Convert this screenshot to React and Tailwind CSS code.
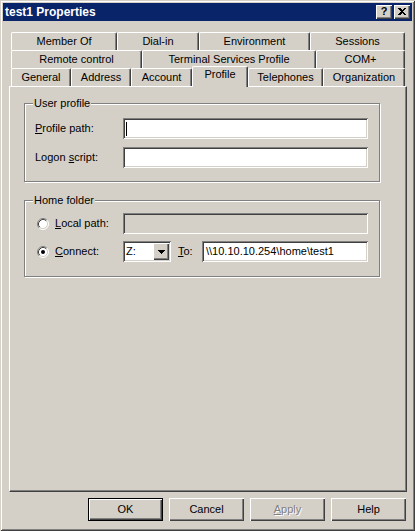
import React from "react";

const sunken =
  "shadow-[inset_1px_1px_0_#808080,inset_-1px_-1px_0_#ffffff,inset_2px_2px_0_#404040,inset_-2px_-2px_0_#d4d0c8]";
const raised =
  "shadow-[inset_1px_1px_0_#ffffff,inset_-1px_-1px_0_#404040,inset_-2px_-2px_0_#808080]";
const defaultRaised =
  "shadow-[inset_0_0_0_1px_#000000,inset_2px_2px_0_#ffffff,inset_-2px_-2px_0_#404040,inset_-3px_-3px_0_#808080]";
const etched =
  "border border-[#808080] shadow-[inset_1px_1px_0_#ffffff,1px_1px_0_#ffffff]";

const tabRows = [
  [
    ["Member Of", "w-[106px]"],
    ["Dial-in", "w-[82px]"],
    ["Environment", "w-[111px]"],
    ["Sessions", "w-[95px]"],
  ],
  [
    ["Remote control", "w-[131px]"],
    ["Terminal Services Profile", "w-[174px]"],
    ["COM+", "w-[89px]"],
  ],
  [
    ["General", "w-[60px]"],
    ["Address", "w-[60px]"],
    ["Account", "w-[61px]"],
    ["Profile", "w-[56px]", true],
    ["Telephones", "w-[75px]"],
    ["Organization", "w-[82px]"],
  ],
];

function Tab({ label, width, selected }) {
  if (selected) {
    return (
      <div
        className={`relative z-10 -mb-px flex h-[21px] shrink-0 justify-center rounded-t-[2px] border-x border-t border-l-white border-r-[#404040] border-t-white bg-[#d4d0c8] pt-px shadow-[inset_-1px_0_0_#808080] ${width}`}
      >
        {label}
      </div>
    );
  }
  return (
    <div
      className={`flex h-[18px] shrink-0 items-center justify-center rounded-t-[2px] border-x border-t border-l-white border-r-[#404040] border-t-white bg-[#d4d0c8] shadow-[inset_-1px_0_0_#808080] ${width}`}
    >
      {label}
    </div>
  );
}

function Radio({ checked }) {
  return (
    <svg width="12" height="12" viewBox="0 0 12 12" className="shrink-0">
      <circle cx="6" cy="6" r="5" fill="#fff" />
      <path d="M2.11 9.89A5.5 5.5 0 0 1 9.89 2.11" stroke="#808080" fill="none" />
      <path d="M9.89 2.11A5.5 5.5 0 0 1 2.11 9.89" stroke="#fff" fill="none" />
      <path d="M2.82 9.18A4.5 4.5 0 0 1 9.18 2.82" stroke="#404040" fill="none" />
      <path d="M9.18 2.82A4.5 4.5 0 0 1 2.82 9.18" stroke="#d4d0c8" fill="none" />
      {checked && <circle cx="6" cy="6" r="2" fill="#000" />}
    </svg>
  );
}

function GroupBox({ title, height, children }) {
  return (
    <div className={`relative w-[356px] ${height} ${etched}`}>
      <span className="absolute -top-[7px] left-[8px] bg-[#d4d0c8] px-px">
        {title}
      </span>
      {children}
    </div>
  );
}

function Button({ children, isDefault, disabled }) {
  return (
    <div
      className={`flex h-[23px] w-[75px] items-center justify-center bg-[#d4d0c8] ${
        isDefault ? defaultRaised : raised
      } ${disabled ? "text-[#808080] [text-shadow:1px_1px_0_#ffffff]" : ""}`}
    >
      {children}
    </div>
  );
}

export default function App() {
  return (
    <div className="h-[531px] w-[415px] bg-[#d4d0c8] p-[3px] font-['Liberation_Sans',Arial,sans-serif] text-[11px] leading-[13px] text-black shadow-[inset_1px_1px_0_#d4d0c8,inset_-1px_-1px_0_#404040,inset_2px_2px_0_#ffffff,inset_-2px_-2px_0_#808080]">
      {/* title bar */}
      <div className="flex h-[18px] items-center justify-between bg-[#0a246a] pl-[2px] pr-[2px]">
        <span className="text-[12px] font-bold text-white">test1 Properties</span>
        <div className="flex gap-[2px]">
          <div
            className={`flex h-[14px] w-[16px] items-center justify-center bg-[#d4d0c8] pb-px text-[11px] font-bold ${raised}`}
          >
            ?
          </div>
          <div className={`flex h-[14px] w-[16px] items-center justify-center bg-[#d4d0c8] pb-px ${raised}`}>
            <svg width="8" height="7" viewBox="0 0 8 7" shapeRendering="crispEdges">
              <path d="M0 0h2l2 2 2-2h2L5 3.5 8 7H6L4 5 2 7H0l3-3.5z" fill="#000" />
            </svg>
          </div>
        </div>
      </div>

      {/* tabs */}
      <div className="ml-[8px] mt-[11px] flex flex-col">
        {tabRows.map((row, i) => (
          <div key={i} className="flex h-[18px] items-end">
            {row.map(([label, width, selected]) => (
              <Tab key={label} label={label} width={width} selected={selected} />
            ))}
          </div>
        ))}
      </div>

      {/* page */}
      <div className="ml-[6px] h-[406px] w-[398px] border-b border-l border-r border-t border-b-[#404040] border-l-white border-r-[#404040] border-t-white pl-[14px] pt-[16px] shadow-[inset_-1px_-1px_0_#808080]">
        <GroupBox title="User profile" height="h-[79px]">
          <div className="flex flex-col gap-[8px] pl-[10px] pt-[14px]">
            <div className="flex h-[21px] items-center">
              <span className="w-[88px]">
                <u>P</u>rofile path:
              </span>
              <div className={`flex h-[21px] w-[245px] items-center bg-white pl-[3px] ${sunken}`}>
                <span className="h-[14px] w-px bg-black" />
              </div>
            </div>
            <div className="flex h-[21px] items-center">
              <span className="w-[88px]">
                Logon <u>s</u>cript:
              </span>
              <div className={`h-[21px] w-[245px] bg-white ${sunken}`} />
            </div>
          </div>
        </GroupBox>

        <div className="mt-[18px]">
          <GroupBox title="Home folder" height="h-[77px]">
            <div className="flex flex-col gap-[7px] pl-[12px] pt-[12px]">
              <div className="flex h-[21px] items-center">
                <div className="flex w-[86px] items-center gap-[6px]">
                  <Radio />
                  <span>
                    <u>L</u>ocal path:
                  </span>
                </div>
                <div className={`h-[21px] w-[245px] bg-[#d4d0c8] ${sunken}`} />
              </div>
              <div className="flex h-[21px] items-center">
                <div className="flex w-[86px] items-center gap-[6px]">
                  <Radio checked />
                  <span>
                    <u>C</u>onnect:
                  </span>
                </div>
                <div className={`flex h-[21px] w-[48px] items-center justify-between bg-white p-[2px] ${sunken}`}>
                  <span className="pl-px">Z:</span>
                  <div className={`flex h-[17px] w-[16px] items-center justify-center bg-[#d4d0c8] ${raised}`}>
                    <svg width="7" height="4" viewBox="0 0 7 4" shapeRendering="crispEdges">
                      <path d="M0 0h7v1H6v1H5v1H4v1H3V3H2V2H1V1H0z" fill="#000" />
                    </svg>
                  </div>
                </div>
                <span className="ml-[7px] w-[24px]">
                  <u>T</u>o:
                </span>
                <div className={`flex h-[21px] w-[166px] items-center bg-white pl-[4px] ${sunken}`}>
                  {"\\\\10.10.10.254\\home\\test1"}
                </div>
              </div>
            </div>
          </GroupBox>
        </div>
      </div>

      {/* buttons */}
      <div className="mt-[6px] flex justify-end gap-[6px] pr-[6px]">
        <Button isDefault>OK</Button>
        <Button>Cancel</Button>
        <Button disabled>
          <span>
            <u>A</u>pply
          </span>
        </Button>
        <Button>Help</Button>
      </div>
    </div>
  );
}
